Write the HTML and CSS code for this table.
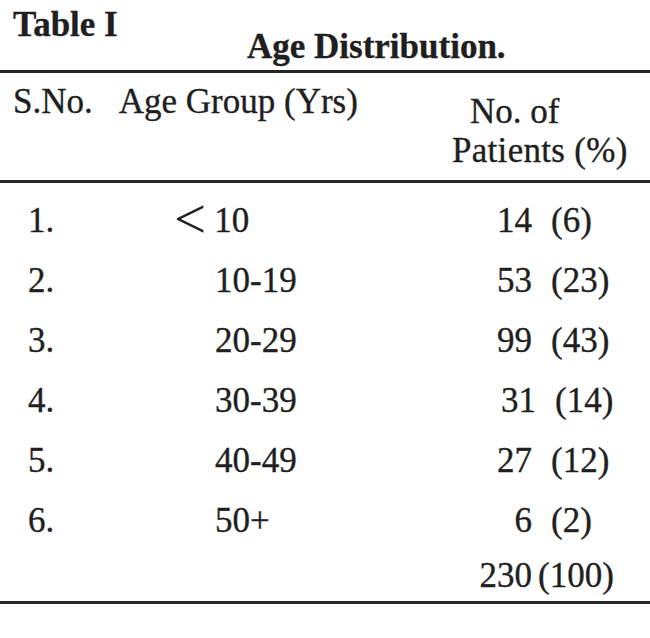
FILE: index.html
```html
<!DOCTYPE html>
<html lang="en">
<head>
<meta charset="utf-8">
<title>Table I – Age Distribution</title>
<link rel="stylesheet" href="styles.css">
</head>
<body>
<div class="page">
  <div class="caption">
    <div class="label">Table I</div>
    <div class="title">Age Distribution.</div>
  </div>
  <div class="rule"></div>
  <div class="head">
    <div class="head-left"><span>S.No.</span><span>Age Group (Yrs)</span></div>
    <div class="head-right">
      <div class="h-line1">No. of</div>
      <div class="h-line2">Patients (%)</div>
    </div>
  </div>
  <div class="rule"></div>
  <div class="rows">
    <div class="row"><div class="sno">1.</div><div class="age"><span class="lt">&lt;</span>10</div><div class="count">14</div><div class="pct">(6)</div></div>
    <div class="row"><div class="sno">2.</div><div class="age">10-19</div><div class="count">53</div><div class="pct">(23)</div></div>
    <div class="row"><div class="sno">3.</div><div class="age">20-29</div><div class="count">99</div><div class="pct">(43)</div></div>
    <div class="row nudge"><div class="sno">4.</div><div class="age">30-39</div><div class="count">31</div><div class="pct">(14)</div></div>
    <div class="row"><div class="sno">5.</div><div class="age">40-49</div><div class="count">27</div><div class="pct">(12)</div></div>
    <div class="row short"><div class="sno">6.</div><div class="age">50+</div><div class="count">6</div><div class="pct">(2)</div></div>
    <div class="row short total"><div class="sno"></div><div class="age"></div><div class="count">230</div><div class="pct">(100)</div></div>
  </div>
  <div class="rule"></div>
</div>
</body>
</html>
```
FILE: styles.css
```css
html, body {
  margin: 0;
  padding: 0;
  background: #ffffff;
}

body {
  color: #1f1f1f;
  font-family: "Liberation Serif", "Times New Roman", serif;
  font-size: 35px;
  -webkit-text-stroke: 0.35px #1f1f1f;
}

.page {
  width: 650px;
}

.caption {
  display: grid;
  grid-template-columns: 247px auto;
  height: 70px;
  font-weight: bold;
  line-height: 40px;
}

.label {
  padding-left: 13px;
  padding-top: 5px;
}

.title {
  padding-top: 27px;
}

.rule {
  height: 3px;
  background: #262626;
}

.head {
  display: flex;
  height: 107px;
  line-height: 39px;
}

.head-left {
  display: flex;
  gap: 26px;
  width: 439px;
  padding-left: 13px;
  padding-top: 9px;
}

.head-right {
  padding-top: 19px;
}

.h-line1 {
  padding-left: 18px;
}

.h-line2 {
  letter-spacing: 0.3px;
}

.rows {
  padding-top: 8px;
}

.row {
  display: grid;
  grid-template-columns: 215px 257px 60px 1fr;
  height: 60px;
  line-height: 60px;
}

.row.short {
  height: 55px;
}

.sno {
  padding-left: 28px;
}

.lt {
  font-size: 57px;
  line-height: 0;
  vertical-align: -6px;
  margin-left: -41px;
  margin-right: 8px;
  -webkit-text-stroke: 0;
}

.count {
  text-align: right;
}

.pct {
  padding-left: 19px;
}

.nudge .count {
  margin-right: -4px;
}

.nudge .pct {
  padding-left: 23px;
}

.total .pct {
  padding-left: 6px;
}
```
